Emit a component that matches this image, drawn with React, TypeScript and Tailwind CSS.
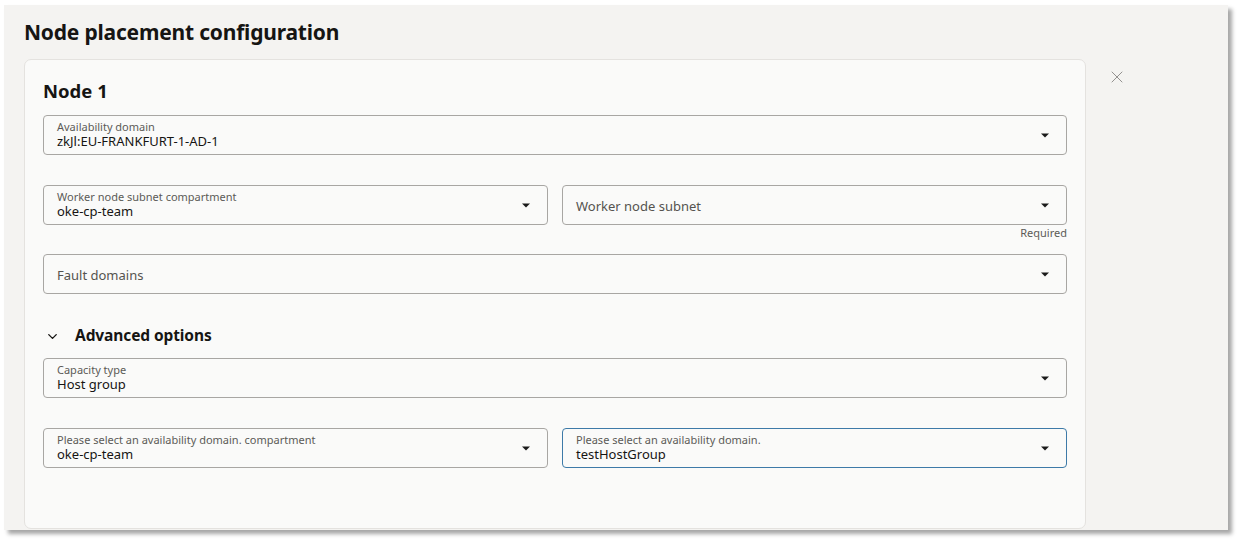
import { ChevronDown, X } from 'lucide-react'

const font = { fontFamily: '"Noto Sans", "Open Sans", sans-serif' }

function Caret() {
  return (
    <svg width="8" height="5" viewBox="0 0 8 5" className="shrink-0">
      <path d="M0 0.5h8L4 4.5z" fill="#1a1a1a" />
    </svg>
  )
}

interface SelectProps {
  label: string
  value?: string
  focused?: boolean
  className?: string
}

function Select({ label, value, focused, className = '' }: SelectProps) {
  return (
    <div
      className={`h-[40px] flex items-center justify-between rounded-[4px] bg-[#fafaf9] pl-[13px] pr-[17px] ${
        focused ? 'border-[1.5px] border-[#3d7aa8]' : 'border border-[#a8a6a3]'
      } ${className}`}
    >
      {value ? (
        <div className="flex flex-col leading-none">
          <span className="text-[11px] text-[#5c5a57] leading-[13px]">{label}</span>
          <span className="text-[13px] text-[#161513] leading-[17px]">{value}</span>
        </div>
      ) : (
        <span className="text-[13px] text-[#55534f] mt-[3px]">{label}</span>
      )}
      <Caret />
    </div>
  )
}

export default function App() {
  return (
    <div className="w-[1242px] h-[544px] bg-white pt-[5px] pl-[4px]" style={font}>
      <div className="w-[1224px] h-[525px] bg-[#f4f3f1] shadow-[4px_4px_4px_rgba(0,0,0,0.35)] pl-[20px] pt-[13px]">
        <h1 className="text-[21px] font-bold text-[#161513] leading-[28px] tracking-[-0.2px]">Node placement configuration</h1>
        <div className="flex mt-[13px]">
          <div className="w-[1062px] h-[470px] rounded-[7px] border border-[#e4e2df] bg-[#fafaf9] px-[18px] pt-[18px]">
            <h2 className="text-[18.5px] font-bold text-[#161513] leading-[26px]">Node 1</h2>
            <Select className="mt-[11px]" label="Availability domain" value="zkJl:EU-FRANKFURT-1-AD-1" />
            <div className="grid grid-cols-2 gap-[14px] mt-[30px]">
              <Select label="Worker node subnet compartment" value="oke-cp-team" />
              <div>
                <Select label="Worker node subnet" />
                <div className="text-right text-[11px] text-[#5c5a57] leading-[14px] mt-[1px]">Required</div>
              </div>
            </div>
            <Select className="mt-[14px]" label="Fault domains" />
            <div className="flex items-center mt-[30px] h-[24px]">
              <ChevronDown size={15} strokeWidth={2.2} className="ml-[2px] text-[#161513]" />
              <span className="ml-[15px] text-[15.5px] font-bold text-[#161513] tracking-[-0.1px]">Advanced options</span>
            </div>
            <Select className="mt-[10px]" label="Capacity type" value="Host group" />
            <div className="grid grid-cols-2 gap-[14px] mt-[30px]">
              <Select label="Please select an availability domain. compartment" value="oke-cp-team" />
              <Select label="Please select an availability domain." value="testHostGroup" focused />
            </div>
          </div>
          <X size={20} strokeWidth={1.1} className="ml-[21px] mt-[8px] text-[#8a8885]" />
        </div>
      </div>
    </div>
  )
}
